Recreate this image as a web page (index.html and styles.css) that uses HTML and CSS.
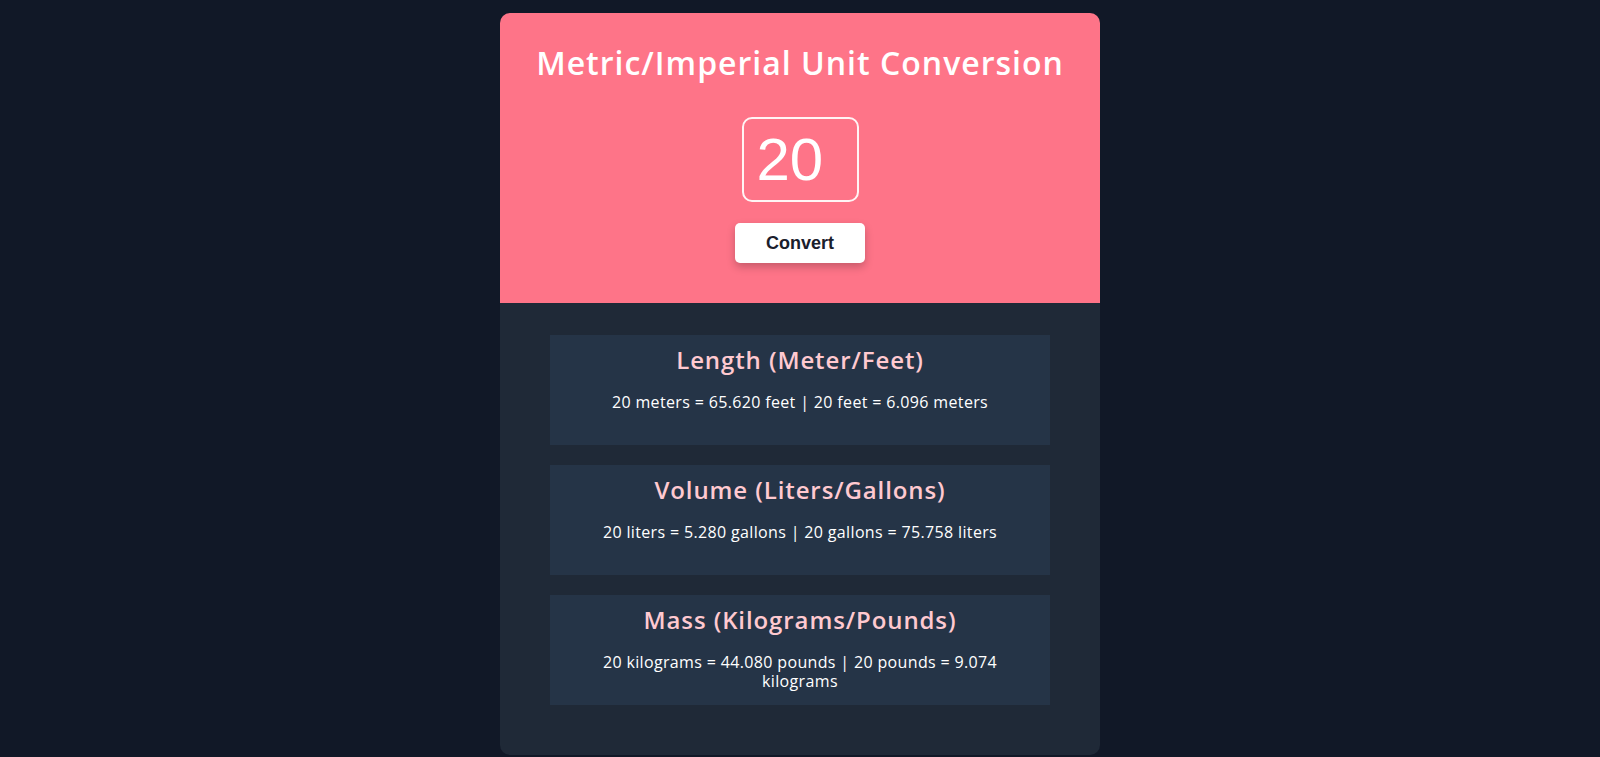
FILE: index.html
```html
<!DOCTYPE html>
<html lang="en">
<head>
<meta charset="utf-8">
<title>Metric/Imperial Unit Conversion</title>
<link rel="stylesheet" href="styles.css">
</head>
<body>
<main class="card">
  <section class="hero">
    <h1 class="hero-title">Metric/Imperial Unit Conversion</h1>
    <input class="amount" type="text" value="20">
    <button class="convert-btn" type="button">Convert</button>
  </section>
  <section class="results">
    <div class="result">
      <h2 class="result-title">Length (Meter/Feet)</h2>
      <p class="result-text">20 meters = 65.620 feet | 20 feet = 6.096 meters</p>
    </div>
    <div class="result">
      <h2 class="result-title">Volume (Liters/Gallons)</h2>
      <p class="result-text">20 liters = 5.280 gallons | 20 gallons = 75.758 liters</p>
    </div>
    <div class="result">
      <h2 class="result-title">Mass (Kilograms/Pounds)</h2>
      <p class="result-text">20 kilograms = 44.080 pounds | 20 pounds = 9.074 kilograms</p>
    </div>
  </section>
</main>
</body>
</html>
```
FILE: styles.css
```css
* { box-sizing: border-box; }

html, body { height: 100%; }

body {
  margin: 0;
  padding-top: 13px;
  background: #111827;
  font-family: "Open Sans", "Noto Sans", sans-serif;
  overflow: hidden;
}

.card {
  width: 600px;
  height: 742px;
  margin: 0 auto;
  border-radius: 10px;
  overflow: hidden;
  background: #1f2937;
  display: flex;
  flex-direction: column;
}

.hero {
  background: #fe7488;
  padding: 30px 0 40px;
  display: flex;
  flex-direction: column;
  align-items: center;
}

.hero-title {
  margin: 0;
  color: #ffffff;
  font-size: 32px;
  line-height: 40px;
  font-weight: 600;
  letter-spacing: 1px;
}

.amount {
  margin-top: 34px;
  width: 117px;
  height: 85px;
  padding: 0 13px;
  border: 2px solid #fff4f5;
  border-radius: 10px;
  background: transparent;
  color: #ffffff;
  font-family: "Liberation Sans", Arial, sans-serif;
  font-size: 60px;
  outline: none;
}

.convert-btn {
  margin-top: 21px;
  width: 130px;
  height: 40px;
  padding: 0;
  border: none;
  border-radius: 5px;
  background: #ffffff;
  color: #1a202c;
  font-family: "Liberation Sans", Arial, sans-serif;
  font-size: 18px;
  font-weight: 700;
  box-shadow: 0 4px 8px rgba(0, 0, 0, 0.22);
}

.results {
  padding: 32px 50px 50px;
  display: flex;
  flex-direction: column;
  gap: 20px;
}

.result {
  height: 110px;
  padding: 10px 20px;
  background: #253447;
  text-align: center;
}

.result-title {
  margin: 0;
  color: #ffc9d0;
  font-size: 24px;
  line-height: 29px;
  font-weight: 600;
  letter-spacing: 0.9px;
}

.result-text {
  margin: 19px 0 0;
  color: #ffffff;
  font-size: 16px;
  line-height: 19px;
  letter-spacing: 0.35px;
}
```
